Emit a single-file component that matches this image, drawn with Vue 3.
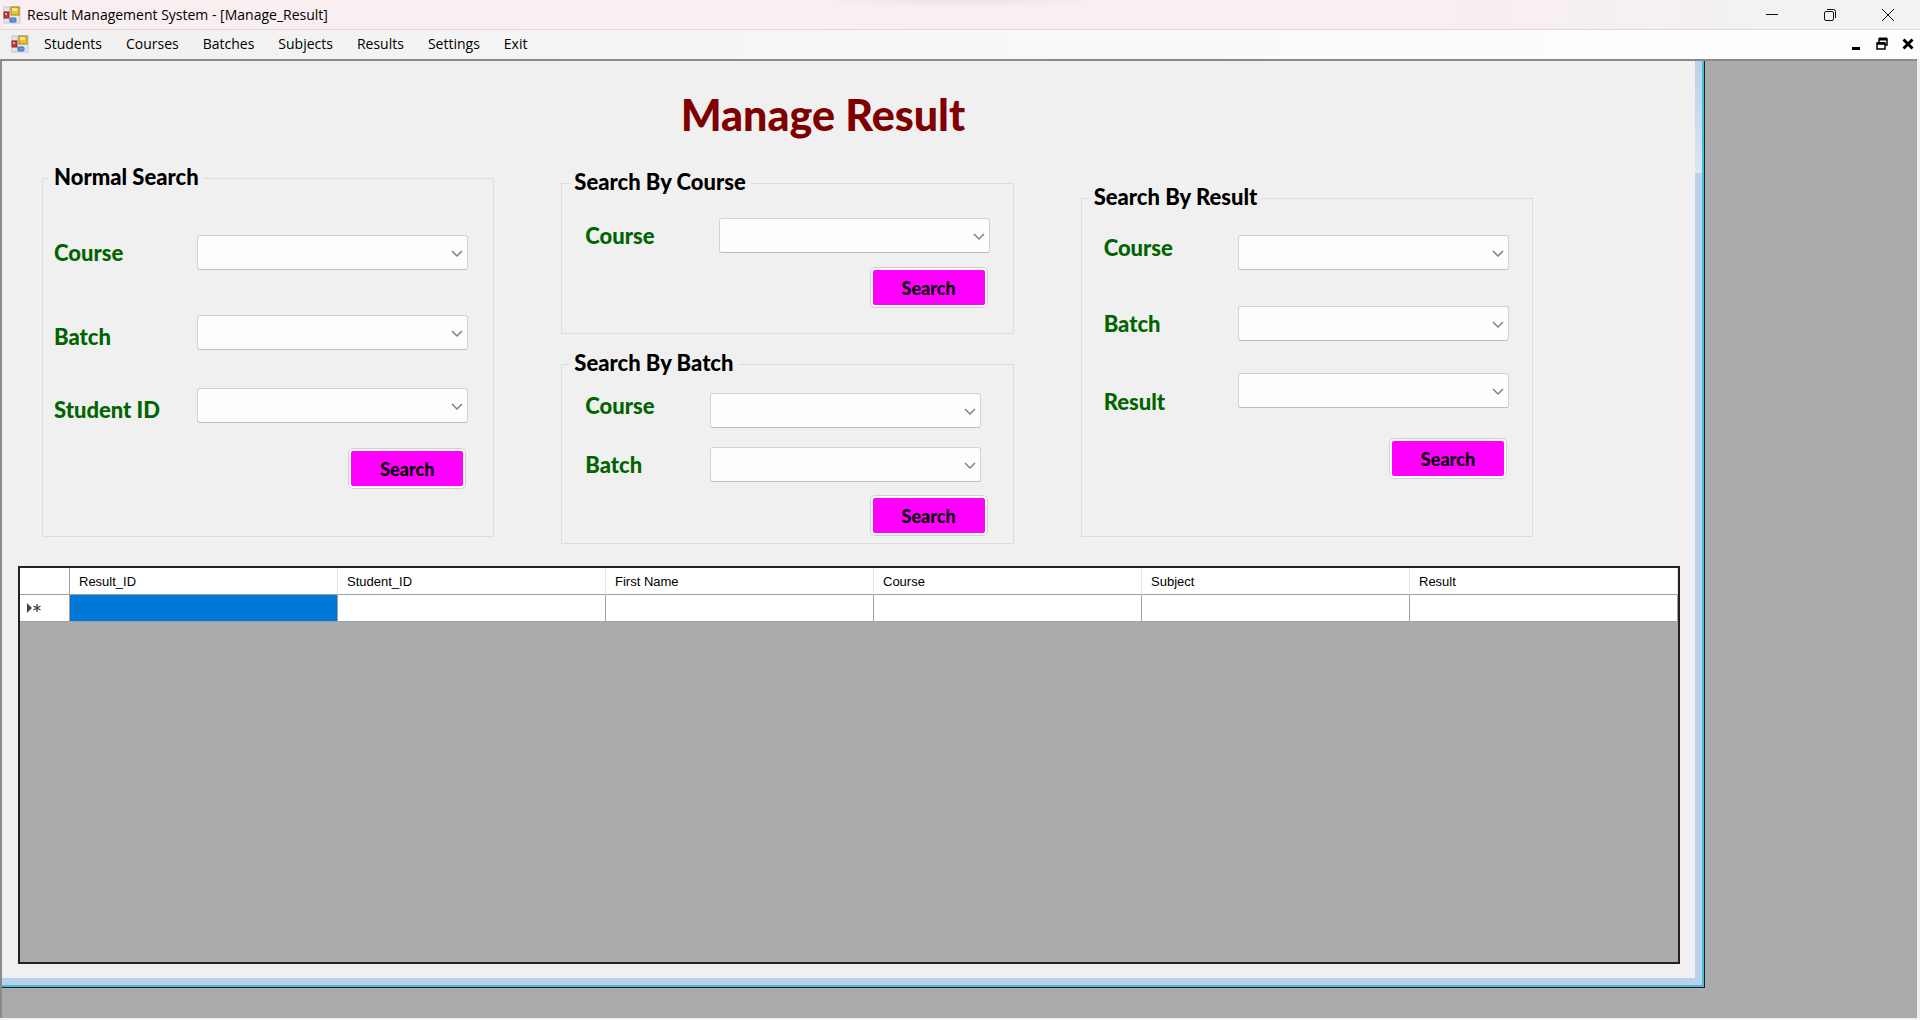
<script setup>
import { ref } from 'vue'

const menus = ['Students', 'Courses', 'Batches', 'Subjects', 'Results', 'Settings', 'Exit']
const columns = ['Result_ID', 'Student_ID', 'First Name', 'Course', 'Subject', 'Result']

const groups = [
  {
    id: 'normal',
    title: 'Normal Search',
    fields: [
      { label: 'Course', align: 'center' },
      { label: 'Batch', align: 'end' },
      { label: 'Student ID', align: 'end' },
    ],
  },
  { id: 'course', title: 'Search By Course', fields: [{ label: 'Course', align: 'center' }] },
  {
    id: 'batch',
    title: 'Search By Batch',
    fields: [
      { label: 'Course', align: 'start' },
      { label: 'Batch', align: 'center' },
    ],
  },
  {
    id: 'result',
    title: 'Search By Result',
    fields: [
      { label: 'Course', align: 'start' },
      { label: 'Batch', align: 'center' },
      { label: 'Result', align: 'below' },
    ],
  },
]

const selected = ref(0)
</script>

<template>
  <div class="window">
    <header class="titlebar">
      <svg class="app-icon" viewBox="0 0 18 18" aria-hidden="true">
        <rect x="1" y="1" width="16" height="16" fill="#e6e6ea" stroke="#c3c6cf" />
        <path d="M6.500 1V6M1 5.500H7M6.500 12V17" stroke="#c3c6cf" />
        <rect x="1" y="6" width="5" height="6" fill="#c8382c" stroke="#8f2a22" />
        <rect x="2" y="7" width="2" height="2" fill="#f0a090" />
        <rect x="8" y="1" width="8" height="8" fill="#efc22c" stroke="#a88414" />
        <rect x="9" y="2" width="5" height="3" fill="#fae58a" />
        <rect x="7" y="12" width="6" height="4" rx="1" fill="#5b98ea" stroke="#3f70bd" />
      </svg>
      <span class="caption">Result Management System - [Manage_Result]</span>
      <div class="window-buttons">
        <button type="button" aria-label="Minimize">
          <svg viewBox="0 0 14 14"><path d="M1 6.500H13" /></svg>
        </button>
        <button type="button" aria-label="Restore">
          <svg viewBox="0 0 14 14">
            <rect x="1.500" y="3.500" width="9" height="9" rx="1.500" />
            <path d="M4 1.500H10.500Q12.500 1.500 12.500 3.500V10" />
          </svg>
        </button>
        <button type="button" aria-label="Close">
          <svg viewBox="0 0 14 14"><path d="M1 1L13 13M13 1L1 13" /></svg>
        </button>
      </div>
    </header>

    <nav class="menubar">
      <svg class="app-icon" viewBox="0 0 18 18" aria-hidden="true">
        <rect x="1" y="1" width="16" height="16" fill="#e6e6ea" stroke="#c3c6cf" />
        <path d="M6.500 1V6M1 5.500H7M6.500 12V17" stroke="#c3c6cf" />
        <rect x="1" y="6" width="5" height="6" fill="#c8382c" stroke="#8f2a22" />
        <rect x="2" y="7" width="2" height="2" fill="#f0a090" />
        <rect x="8" y="1" width="8" height="8" fill="#efc22c" stroke="#a88414" />
        <rect x="9" y="2" width="5" height="3" fill="#fae58a" />
        <rect x="7" y="12" width="6" height="4" rx="1" fill="#5b98ea" stroke="#3f70bd" />
      </svg>
      <div class="menus">
        <button v-for="menu in menus" :key="menu" type="button">{{ menu }}</button>
      </div>
      <div class="child-buttons">
        <button type="button" aria-label="Minimize child window">
          <svg viewBox="0 0 14 14"><path d="M3 10H11V13H3Z" fill="#000" /></svg>
        </button>
        <button type="button" aria-label="Restore child window">
          <svg viewBox="0 0 14 14" fill="none" stroke="#000">
            <path d="M4 5V2H12V8H10" stroke-width="1.500" />
            <path d="M4 2H12" stroke-width="3" />
            <rect x="2" y="6" width="8" height="6" stroke-width="1.500" />
            <path d="M2 6.500H10" stroke-width="2.500" />
          </svg>
        </button>
        <button type="button" aria-label="Close child window">
          <svg viewBox="0 0 14 14" fill="none" stroke="#000">
            <path d="M2.500 2.500L11.500 11.500M11.500 2.500L2.500 11.500" stroke-width="3" />
          </svg>
        </button>
      </div>
    </nav>

    <main class="workspace">
      <section class="form">
        <h1>Manage Result</h1>

        <div class="searches">
          <fieldset v-for="group in groups" :key="group.id" :class="group.id">
            <legend>{{ group.title }}</legend>
            <div
              v-for="field in group.fields"
              :key="field.label"
              class="field"
              :class="field.align"
            >
              <label :for="group.id + '-' + field.label">{{ field.label }}</label>
              <div class="combo">
                <select :id="group.id + '-' + field.label"></select>
                <svg viewBox="0 0 12 8" aria-hidden="true">
                  <path d="M1 1L6 6L11 1" fill="none" stroke="#808080" stroke-width="1.500" />
                </svg>
              </div>
            </div>
            <button type="button" class="search">Search</button>
          </fieldset>
        </div>

        <div class="datagrid">
          <table>
            <thead>
              <tr>
                <th class="row-head"></th>
                <th v-for="column in columns" :key="column" scope="col">{{ column }}</th>
              </tr>
            </thead>
            <tbody>
              <tr>
                <td class="row-head">
                  <svg viewBox="0 0 14 10" aria-hidden="true">
                    <path d="M0 0L5 5L0 10Z" fill="#444" />
                    <path d="M10 1V9M6.500 3L13.500 7M13.500 3L6.500 7" stroke="#444" stroke-width="1.300" />
                  </svg>
                </td>
                <td
                  v-for="(column, i) in columns"
                  :key="column"
                  :class="{ selected: selected === i }"
                  @click="selected = i"
                ></td>
              </tr>
            </tbody>
          </table>
        </div>
      </section>
    </main>
  </div>
</template>

<style>
body {
  margin: 0;
}
</style>

<style scoped>
* {
  box-sizing: border-box;
}

.window {
  display: flex;
  flex-direction: column;
  min-height: 100vh;
  background: #f0f0f0;
  color: #000;
  font-family: "Open Sans", "Noto Sans", sans-serif;
}

button {
  padding: 0;
  border: 0;
  background: none;
  color: inherit;
  font-family: inherit;
}

.titlebar {
  display: flex;
  align-items: center;
  height: 30px;
  padding: 0 3px;
  border-bottom: 1px solid #dfd8da;
  background:
    radial-gradient(ellipse 140px 8px at 960px 0, #ece2e4, transparent) no-repeat,
    linear-gradient(90deg, #f9eef0 0%, #f9eef0 75%, #f3f1f3 92%, #f3f1f3 100%);
}

.app-icon {
  width: 18px;
  height: 18px;
}

.caption {
  margin-left: 6px;
  font-size: 14px;
  line-height: 20px;
}

.window-buttons {
  display: flex;
  margin-left: auto;
}

.window-buttons button {
  width: 58px;
  height: 28px;
}

.window-buttons svg {
  display: block;
  width: 14px;
  height: 14px;
  margin: 0 auto;
  fill: none;
  stroke: #111;
}

.menubar {
  display: flex;
  align-items: center;
  height: 29px;
  padding: 0 5px 1px 11px;
  background: linear-gradient(90deg, #f0f0f0, #fdfdfd 85%);
}

.menus {
  display: flex;
  gap: 24px;
  margin-left: 15px;
}

.menus button {
  font-size: 14px;
  line-height: 20px;
}

.child-buttons {
  display: flex;
  gap: 12px;
  margin-left: auto;
}

.child-buttons svg {
  display: block;
  width: 14px;
  height: 14px;
}

.workspace {
  display: flex;
  flex: 1;
  margin: 0 3px 2px 0;
  padding: 0 212px 30px 0;
  border-top: 2px solid #8a8a8a;
  border-left: 2px solid #8a8a8a;
  background: #ababab;
}

.form {
  display: flex;
  flex: 1;
  flex-direction: column;
  padding: 29px 24px 23px 16px;
  border-right: 1px solid #16202a;
  border-bottom: 1px solid #16202a;
  background:
    linear-gradient(#b9d1ea, #d9e7f6) top right 2px / 7px 112px no-repeat,
    linear-gradient(#46bfd2, #46bfd2) right / 2px 100% no-repeat,
    linear-gradient(#46bfd2, #46bfd2) bottom / 100% 2px no-repeat,
    linear-gradient(#b9d1ea, #b9d1ea) right / 9px 100% no-repeat,
    linear-gradient(#b9d1ea, #b9d1ea) bottom / 100% 9px no-repeat,
    #f0f0f0;
}

h1 {
  margin: 0;
  padding-right: 52px;
  color: #800000;
  font-family: Lato, sans-serif;
  font-size: 43px;
  font-weight: 900;
  line-height: 50px;
  text-align: center;
}

.searches {
  display: grid;
  grid-template-columns: repeat(3, minmax(0, 1fr));
  grid-template-rows: auto auto 1fr;
  column-gap: 67px;
  margin: 23px 147px 0 24px;
}

fieldset {
  display: flex;
  flex-direction: column;
  align-items: stretch;
  min-width: 0;
  margin: 0;
  border: 1px solid #dcdcdc;
  font-family: Lato, sans-serif;
}

legend {
  padding: 0 5px 2px;
  font-size: 22px;
  font-weight: 900;
  line-height: 28px;
}

.normal {
  grid-row: 1 / 4;
  align-self: start;
  height: 374px;
  padding: 42px 25px 0 6px;
}

.normal .field {
  padding-left: 5px;
  margin-bottom: 45px;
}

.normal .field + .field {
  margin-bottom: 38px;
}

.normal .field + .field + .field {
  margin-bottom: 25px;
}

.course {
  grid-column: 2;
  height: 166px;
  margin-top: 5px;
  padding: 20px 23px 0 7px;
}

.batch {
  grid-column: 2;
  grid-row: 2;
  height: 195px;
  margin-top: 15px;
  padding: 14px 32px 0 7px;
}

.result {
  grid-column: 3;
  grid-row: 1 / 4;
  align-self: start;
  height: 354px;
  margin-top: 20px;
  padding: 22px 23px 0 7px;
}

.field {
  display: flex;
  justify-content: space-between;
  align-items: center;
  padding-left: 16px;
}

.result .field {
  padding-left: 15px;
}

.field.start {
  align-items: flex-start;
}

.field.end {
  align-items: flex-end;
}

.field.below {
  align-items: flex-end;
  height: 42px;
}

.field.below .combo {
  align-self: flex-start;
}

.course .field {
  margin-bottom: 14px;
}

.batch .field {
  margin-bottom: 19px;
}

.batch .field + .field {
  margin-bottom: 13px;
}

.result .field {
  margin-bottom: 36px;
}

.result .field + .field {
  margin-bottom: 32px;
}

.result .field.below {
  margin-bottom: 23px;
}

label {
  color: #006400;
  font-size: 22px;
  font-weight: 900;
  line-height: 26px;
}

.combo {
  position: relative;
  width: 271px;
  height: 35px;
}

.combo select {
  display: block;
  width: 100%;
  height: 100%;
  border: 1px solid #d2d2d2;
  border-bottom-color: #bcbcbc;
  border-radius: 3px;
  background: #fdfdfd;
  appearance: none;
}

.combo svg {
  position: absolute;
  top: 15px;
  right: 5px;
  width: 12px;
  height: 8px;
  pointer-events: none;
}

.search {
  align-self: flex-end;
  width: 118px;
  height: 41px;
  margin-right: 2px;
  padding: 2px;
  border: 1px solid #d0d0d0;
  border-radius: 5px;
  background: linear-gradient(#f0f, #f0f) content-box, #fdfdfd;
  font-size: 18px;
  font-weight: 900;
}

.batch .search {
  margin-right: -7px;
}

.datagrid {
  flex: 1;
  margin-top: 22px;
  border: 2px solid #222;
  background: #ababab;
}

table {
  width: 100%;
  border-collapse: separate;
  border-spacing: 0;
  table-layout: fixed;
  font-family: "Liberation Sans", Arial, sans-serif;
  font-size: 13px;
}

th,
td {
  height: 27px;
  padding: 0 9px;
  border-right: 1px solid #a0a0a0;
  border-bottom: 1px solid #a0a0a0;
  background: #fff;
  font-weight: 400;
  text-align: left;
}

th {
  border-right-color: #e4e4e4;
}

.row-head {
  width: 50px;
  padding: 0 7px;
  border-right-color: #a0a0a0;
}

.row-head svg {
  display: block;
  width: 14px;
  height: 10px;
}

.selected {
  background: #0078d7;
}
</style>
